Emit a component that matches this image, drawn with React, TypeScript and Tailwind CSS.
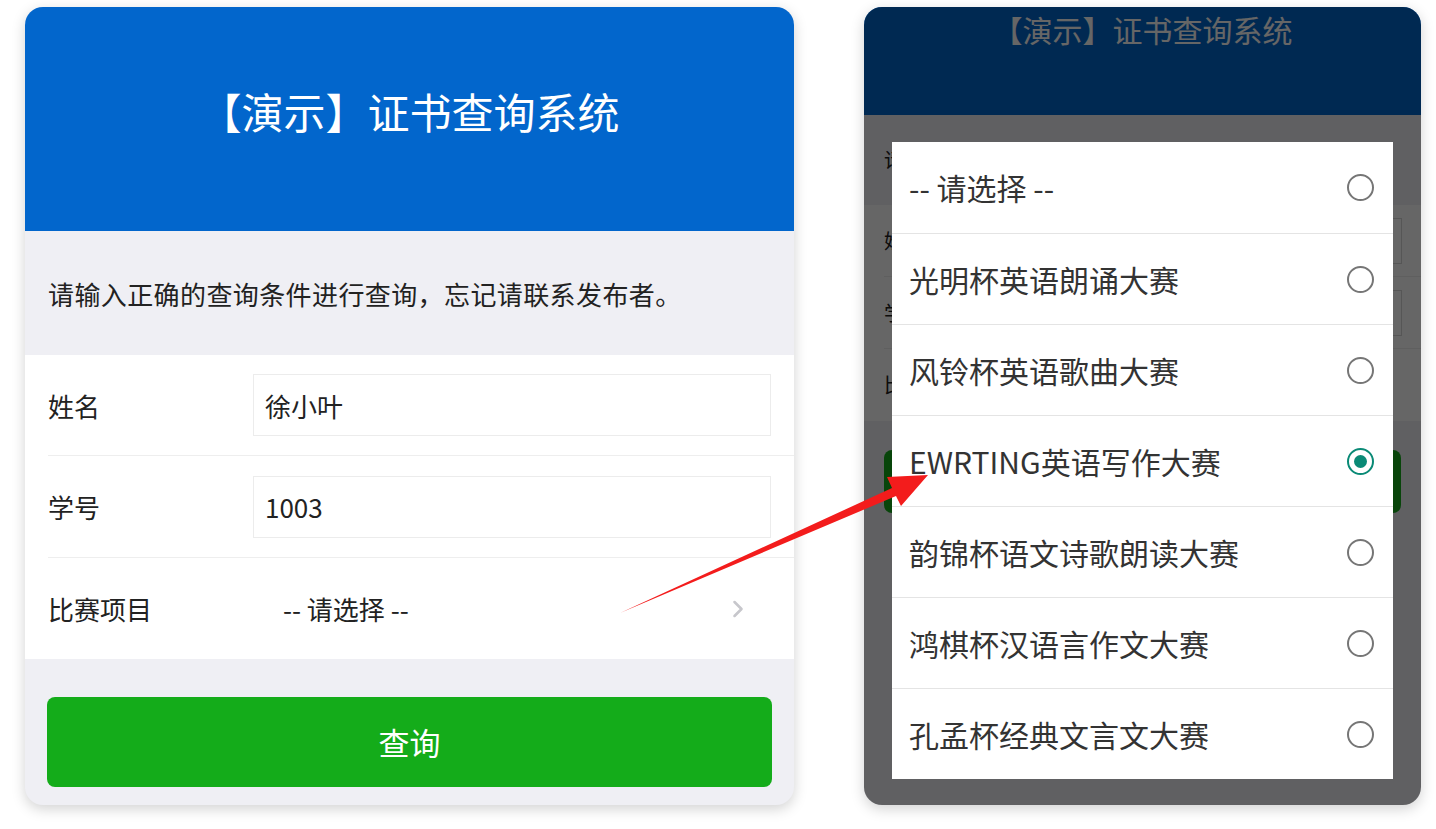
import { ChevronRight } from "lucide-react";

const FONT = { fontFamily: '"Noto Sans CJK SC", "Noto Sans", sans-serif' };

const options = [
  "-- 请选择 --",
  "光明杯英语朗诵大赛",
  "风铃杯英语歌曲大赛",
  "EWRTING英语写作大赛",
  "韵锦杯语文诗歌朗读大赛",
  "鸿棋杯汉语言作文大赛",
  "孔孟杯经典文言文大赛",
];

function Radio({ on }: { on?: boolean }) {
  if (on) {
    return (
      <span className="flex h-[27px] w-[27px] items-center justify-center rounded-full border-[2.5px] border-[#0a8a76]">
        <span className="h-[13px] w-[13px] rounded-full bg-[#0a8a76]" />
      </span>
    );
  }
  return <span className="h-[27px] w-[27px] rounded-full border-2 border-[#767676]" />;
}

function QueryCard() {
  return (
    <div className="flex h-[798px] w-[769px] shrink-0 flex-col overflow-hidden rounded-[18px] bg-[#efeff4] shadow-[0_4px_14px_rgba(0,0,0,0.18)]">
      <div className="flex h-[224px] items-center justify-center bg-[#0266cc] pb-[18px] text-[42px] text-white">
        【演示】证书查询系统
      </div>
      <div className="flex h-[124px] items-center px-[23px] text-[26px] tracking-[0.4px] text-[#222]">
        请输入正确的查询条件进行查询，忘记请联系发布者。
      </div>
      <div className="bg-white">
        <div className="ml-[23px] flex h-[101px] items-center border-b border-[#eeeeee] pr-[23px]">
          <span className="w-[205px] text-[26px] text-[#222]">姓名</span>
          <div className="flex h-[62px] flex-1 items-center border border-[#ececec] pl-[11px] text-[26px] text-[#222]">
            徐小叶
          </div>
        </div>
        <div className="ml-[23px] flex h-[102px] items-center border-b border-[#eeeeee] pr-[23px]">
          <span className="w-[205px] text-[26px] text-[#222]">学号</span>
          <div className="flex h-[62px] flex-1 items-center border border-[#ececec] pl-[11px] text-[26px] text-[#222]">
            1003
          </div>
        </div>
        <div className="ml-[23px] flex h-[101px] items-center pr-[42px]">
          <span className="w-[205px] text-[26px] text-[#222]">比赛项目</span>
          <span className="flex-1 pl-[30px] text-[26px] text-[#222]">-- 请选择 --</span>
          <ChevronRight className="h-[28px] w-[28px] text-[#c7c7cc]" strokeWidth={2.2} />
        </div>
      </div>
      <div className="px-[22px] pt-[38px]">
        <div className="flex h-[90px] items-center justify-center rounded-[8px] bg-[#14ac1a] text-[31px] text-white">
          查询
        </div>
      </div>
    </div>
  );
}

function PickerCard() {
  return (
    <div className="relative h-[798px] w-[557px] shrink-0 overflow-hidden rounded-[18px] bg-[#efeff4] shadow-[0_4px_14px_rgba(0,0,0,0.18)]">
      <div className="flex h-[108px] justify-center bg-[#0266cc] text-[30px] text-white">
        【演示】证书查询系统
      </div>
      <div className="flex h-[90px] items-center px-[20px] text-[20px] text-[#222]">
        请输入正确的查询条件进行查询，忘记请联系发布者。
      </div>
      <div className="bg-white">
        {["姓名", "学号", "比赛项目"].map((l, i) => (
          <div
            key={l}
            className={`ml-[20px] flex h-[72px] items-center pr-[19px] ${i < 2 ? "border-b border-[#eeeeee]" : ""}`}
          >
            <span className="w-[150px] text-[20px] text-[#222]">{l}</span>
            {i < 2 && <div className="h-[46px] flex-1 border border-[#d8d8d8]" />}
          </div>
        ))}
      </div>
      <div className="px-[20px] pt-[29px]">
        <div className="h-[63px] rounded-[8px] bg-[#14ac1a]" />
      </div>

      <div className="absolute inset-0 bg-black/60" />

      <div className="absolute left-[28px] right-[28px] top-[135px] bg-white">
        {options.map((o, i) => (
          <div
            key={o}
            className={`flex h-[91px] items-center justify-between pl-[17px] pr-[19px] ${i > 0 ? "border-t border-[#e4e4e4]" : ""}`}
          >
            <span className="text-[30px] text-[#333]">{o}</span>
            <Radio on={i === 3} />
          </div>
        ))}
      </div>
    </div>
  );
}

export default function App() {
  return (
    <div className="relative h-[829px] w-[1436px] overflow-hidden bg-white" style={FONT}>
      <div className="flex gap-[70px] pl-[25px] pt-[7px]">
        <QueryCard />
        <PickerCard />
      </div>
      <svg className="pointer-events-none absolute left-0 top-0" width="1436" height="829" aria-hidden>
        <polygon points="620,613 892,488 887,477 928,475 901,506 896,496" fill="#f31c1c" />
      </svg>
    </div>
  );
}
